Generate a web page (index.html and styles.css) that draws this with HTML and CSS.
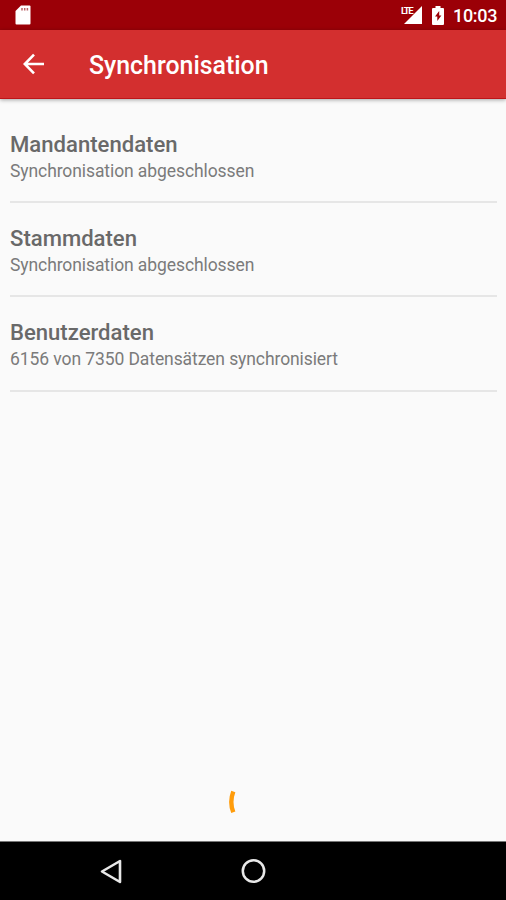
FILE: index.html
```html
<!DOCTYPE html>
<html lang="de">
<head>
<meta charset="utf-8">
<title>Synchronisation</title>
<link rel="stylesheet" href="styles.css">
</head>
<body>
<div class="status">
  <svg class="sd" width="16" height="20" viewBox="0 0 16 20"><path fill="#fff" d="M6 .5h8.500q1 0 1 1v17q0 1-1 1h-13q-1 0-1-1V6z"/><path d="M7 3v2.500M9.700 3v2.500M12.400 3v2.500" stroke="#b96467" stroke-width="1.500"/></svg>
  <div class="signal">
    <span class="lte">LTE</span>
    <svg width="18" height="18" viewBox="0 0 18 18"><path fill="#fff" d="M18 0v18H0z"/></svg>
  </div>
  <svg class="battery" width="12" height="19" viewBox="0 0 12 19"><path fill="#fff" d="M3.500 0h5v2H11q1 0 1 1v15q0 1-1 1H1q-1 0-1-1V3q0-1 1-1h2.500z"/><path fill="#9b0007" d="M7.200 5L3 10.500h2.300v4.500L9.400 9.500H7.200z"/></svg>
  <span class="clock">10:03</span>
</div>
<header class="appbar">
  <svg class="back" width="22" height="22" viewBox="0 0 22 22"><path d="M21 11H2M11 1.700L1.800 11l9.200 9.300" fill="none" stroke="#fff" stroke-width="2.600"/></svg>
  <h1>Synchronisation</h1>
</header>
<main>
  <section><h2>Mandantendaten</h2><p>Synchronisation abgeschlossen</p></section>
  <section><h2>Stammdaten</h2><p>Synchronisation abgeschlossen</p></section>
  <section><h2>Benutzerdaten</h2><p>6156 von 7350 Datensätzen synchronisiert</p></section>
  <svg class="spinner" width="10" height="24" viewBox="0 0 10 24"><path d="M6.300 1.500Q2.300 12 6.300 22.300" fill="none" stroke="#ff9c0b" stroke-width="4.400"/></svg>
</main>
<nav>
  <svg class="nav-back" width="22" height="25" viewBox="0 0 22 25"><path d="M20 2v21L2 12.500z" fill="none" stroke="#e8e8e8" stroke-width="2.600" stroke-linejoin="round"/></svg>
  <svg class="home" width="26" height="26" viewBox="0 0 26 26"><circle cx="13.500" cy="13" r="10.700" fill="none" stroke="#e8e8e8" stroke-width="2.500"/></svg>
</nav>
</body>
</html>
```
FILE: styles.css
```css
* { box-sizing: border-box; }
body {
  margin: 0;
  height: 900px;
  display: flex;
  flex-direction: column;
  overflow: hidden;
  background: #fafafa;
  font-family: Roboto, sans-serif;
}
h1, h2, p { margin: 0; white-space: nowrap; }
svg { display: block; flex: none; }
.status {
  height: 30px;
  flex: none;
  display: flex;
  align-items: flex-start;
  background: #9b0007;
  color: #fff;
}
.sd { margin: 5px 0 0 15px; }
.signal {
  display: flex;
  justify-content: flex-end;
  position: relative;
  width: 22px;
  margin: 6px 0 0 auto;
}
.lte {
  position: absolute;
  left: 1px;
  top: 0;
  font-size: 9.500px;
  line-height: 10px;
  font-weight: 700;
  letter-spacing: -1.300px;
}
.battery { margin: 6px 0 0 10px; }
.clock {
  width: 53px;
  margin-left: 9px;
  font-size: 18px;
  line-height: 32px;
  font-weight: 500;
  letter-spacing: -0.300px;
}
.appbar {
  height: 69px;
  flex: none;
  display: flex;
  align-items: center;
  padding-left: 23px;
  background: #d32f2f;
  border-bottom: 1px solid #bd1519;
  box-shadow: 0 1px 4px rgba(0, 0, 0, .35);
  color: #fff;
}
h1 {
  margin: 4px 0 0 44px;
  font-size: 24.900px;
  line-height: 32px;
  font-weight: 500;
}
main {
  flex: 1;
  display: flex;
  flex-direction: column;
  padding: 10px 9px 0 10px;
  color: #696969;
}
section {
  height: 94.200px;
  flex: none;
  padding-top: 22px;
  border-bottom: 2px solid #e6e6e6;
}
h2 {
  font-size: 22.100px;
  line-height: 27px;
  font-weight: 500;
}
p {
  font-size: 17.500px;
  line-height: 27px;
  letter-spacing: -0.090px;
  color: #7b7b7b;
}
.spinner { margin: auto 0 27px 217px; }
nav {
  height: 59px;
  flex: none;
  display: flex;
  align-items: center;
  background: #000;
  border-top: 1px solid #777;
}
.nav-back { margin-left: 100px; }
.home { margin-left: 118px; }
```
